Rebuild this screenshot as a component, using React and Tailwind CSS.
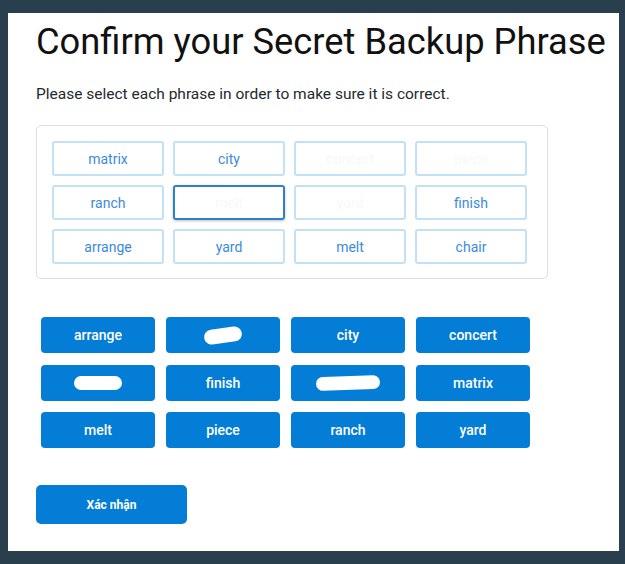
import React from "react";

const top = [
  { w: "matrix" },
  { w: "city" },
  { w: "concert", faint: true },
  { w: "piece", faint: true },
  { w: "ranch" },
  { w: "melt", faint: true, selected: true },
  { w: "yard", faint: true },
  { w: "finish" },
  { w: "arrange" },
  { w: "yard" },
  { w: "melt" },
  { w: "chair" },
];

const bottom = [
  { w: "arrange" },
  { blob: "w-[38px] h-[15px] -rotate-[8deg]" },
  { w: "city" },
  { w: "concert" },
  { blob: "w-[48px] h-[14px]" },
  { w: "finish" },
  { blob: "w-[64px] h-[14px] -rotate-[2deg]" },
  { w: "matrix" },
  { w: "melt" },
  { w: "piece" },
  { w: "ranch" },
  { w: "yard" },
];

export default function App() {
  return (
    <div
      className="w-[625px] h-[564px] bg-[#2a3f4e] pt-[13px] pl-[8px] pr-[6px] pb-[13px]"
      style={{ fontFamily: "Roboto, 'Liberation Sans', sans-serif" }}
    >
      <div className="w-full h-full bg-white pl-[28px] pt-[7px]">
        <h1 className="text-[36.3px] leading-[44px] text-[#111] font-normal whitespace-nowrap">
          Confirm your Secret Backup Phrase
        </h1>
        <p className="mt-[20px] text-[15.5px] leading-[20px] text-[#24292e] whitespace-nowrap">
          Please select each phrase in order to make sure it is correct.
        </p>
        <div className="mt-[21px] w-[512px] h-[154px] border border-[#dedede] rounded-[5px] pl-[15px] pt-[15px]">
          <div className="grid grid-cols-[repeat(4,112px)] auto-rows-[35px] gap-x-[9px] gap-y-[9px]">
            {top.map((c, i) => (
              <div
                key={i}
                className={
                  "flex items-center justify-center pt-[2px] rounded-[3px] text-[14px] " +
                  (c.selected
                    ? "border-2 border-[#2f80c8] shadow-[0_1px_3px_rgba(0,0,0,0.25)] "
                    : "border-2 border-[#c2e0f6] ") +
                  (c.faint ? "text-[#f7f9fb]" : "text-[#3c8bd8]")
                }
              >
                {c.w}
              </div>
            ))}
          </div>
        </div>
        <div className="mt-[38px] ml-[5px] grid grid-cols-[repeat(4,114px)] auto-rows-[36px] gap-x-[11px] gap-y-[11.5px]">
          {bottom.map((c, i) => (
            <div
              key={i}
              className="flex items-center justify-center pt-[1px] rounded-[4px] bg-[#037dd6] text-white text-[14px] font-medium"
            >
              {c.blob ? (
                <span className={"block bg-white rounded-full " + c.blob} />
              ) : (
                c.w
              )}
            </div>
          ))}
        </div>
        <button className="mt-[37px] w-[151px] h-[39px] rounded-[5px] bg-[#037dd6] text-white text-[12px] font-bold flex items-center justify-center">
          Xác nhận
        </button>
      </div>
    </div>
  );
}
